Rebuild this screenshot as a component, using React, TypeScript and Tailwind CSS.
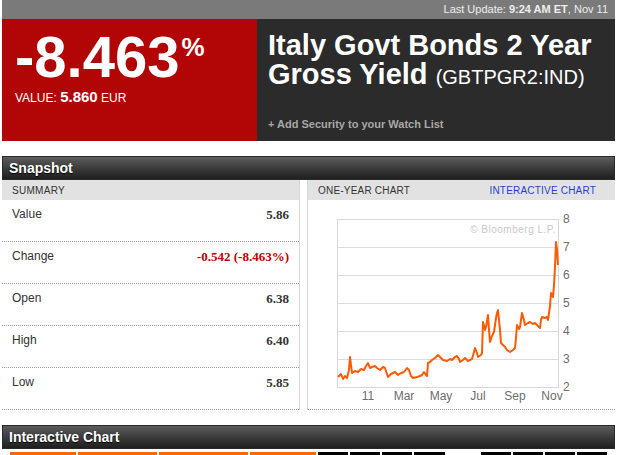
import React from "react";

type Row = { label: string; value: string; red?: boolean };

const rows: Row[] = [
  { label: "Value", value: "5.86" },
  { label: "Change", value: "-0.542 (-8.463%)", red: true },
  { label: "Open", value: "6.38" },
  { label: "High", value: "6.40" },
  { label: "Low", value: "5.85" },
];

// one-year yield series, in page pixel coordinates of the plot
const series: [number, number][] = [
  [338, 377], [341, 374], [343, 379], [345, 376], [347, 378], [349, 370], [350, 357], [351, 365],
  [352, 373], [355, 371], [358, 372], [361, 369], [364, 370], [366, 366], [368, 363], [370, 368],
  [372, 367], [375, 366], [377, 368], [380, 370], [383, 367], [385, 368], [387, 374], [388, 377],
  [391, 374], [395, 372], [398, 375], [401, 373], [404, 372], [407, 368], [409, 370], [411, 376],
  [413, 378], [417, 377], [420, 376], [422, 375], [424, 372], [426, 375], [427, 376], [428, 363],
  [430, 362], [432, 360], [435, 358], [438, 355], [440, 357], [443, 360], [447, 361], [450, 359],
  [452, 360], [455, 357], [457, 356], [459, 359], [460, 362], [463, 360], [465, 358], [468, 361],
  [472, 359], [474, 352], [475, 348], [477, 353], [478, 357], [481, 355], [482, 353], [483, 322],
  [485, 330], [486, 327], [488, 315], [489, 330], [490, 342], [492, 336], [494, 332], [496, 318],
  [497, 313], [498, 310], [500, 330], [501, 343], [503, 345], [505, 347], [507, 350], [510, 352],
  [513, 350], [515, 348], [516, 338], [517, 325], [519, 329], [520, 327], [522, 313], [524, 320],
  [525, 325], [528, 323], [530, 322], [533, 324], [535, 323], [538, 326], [540, 328], [541, 320],
  [542, 317], [545, 318], [547, 317], [548, 320], [550, 306], [551, 293], [553, 297], [554, 285],
  [555, 267], [556, 242], [557, 250], [558, 265],
];

const gridYs = [219, 247, 275, 303, 331, 359, 387];
const yLabels = ["8", "7", "6", "5", "4", "3", "2"];
const months: [string, number][] = [
  ["11", 368], ["Mar", 404], ["May", 441], ["Jul", 478], ["Sep", 515], ["Nov", 552],
];

function SectionBar({ title }: { title: string }) {
  return (
    <div className="h-[24px] flex items-center pl-[6px] bg-gradient-to-b from-[#5c5c5c] to-[#1f1f1f] border border-[#2a2a2a]">
      <span className="text-white text-[14px] font-bold font-['Liberation_Sans',sans-serif] [text-shadow:0_1px_1px_#000]">
        {title}
      </span>
    </div>
  );
}

function YieldChart() {
  const points = series.map(([x, y]) => `${x},${y}`).join(" ");
  return (
    <svg width="307" height="209" viewBox="308 200 307 209" className="block">
      <rect x="337.5" y="219.5" width="221" height="168" fill="#fff" stroke="#d8d8d8" />
      {gridYs.slice(1, -1).map((y) => (
        <line key={y} x1="338" x2="558" y1={y + 0.5} y2={y + 0.5} stroke="#dcdcdc" />
      ))}
      <text x="556" y="233" textAnchor="end" fontSize="10" fill="#c8c8c8" fontFamily="Liberation Sans, sans-serif" letterSpacing="0.5">
        © Bloomberg L.P.
      </text>
      {gridYs.map((y, i) => (
        <text key={y} x="563" y={y + 4} fontSize="12" fill="#6d6d6d" fontFamily="Liberation Sans, sans-serif">
          {yLabels[i]}
        </text>
      ))}
      {months.map(([m, x]) => (
        <text key={m} x={x} y="400" textAnchor="middle" fontSize="12" fill="#6d6d6d" fontFamily="Liberation Sans, sans-serif">
          {m}
        </text>
      ))}
      <polyline points={points} fill="none" stroke="#ff5a00" strokeWidth="2" strokeLinejoin="round" />
    </svg>
  );
}

export default function App() {
  return (
    <div className="w-[625px] h-[455px] overflow-hidden bg-white font-['Liberation_Sans',sans-serif]">
      <div className="ml-[2px] w-[613px]">
        {/* update strip */}
        <div className="h-[19px] bg-[#7a7a7a] flex items-center justify-end pr-[7px] text-[11px] text-[#eeeeee]">
          Last Update:&nbsp;<b>9:24 AM ET</b>, Nov 11
        </div>

        {/* quote header */}
        <div className="flex h-[122px]">
          <div className="w-[255px] bg-[#b20606] pl-[13px] pt-[9px] text-white">
            <div className="flex items-start leading-none">
              <span className="text-[58px] font-bold">-8.463</span>
              <span className="text-[26px] font-bold mt-[6px] ml-[2px]">%</span>
            </div>
            <div className="mt-[3px] flex items-baseline text-[12px] leading-none">
              <span>VALUE:&nbsp;</span>
              <span className="text-[15px] font-bold">5.860</span>
              <span>&nbsp;EUR</span>
            </div>
          </div>
          <div className="flex-1 bg-[#2b2b2b] pl-[11px] pt-[12px] flex flex-col">
            <div className="text-white text-[29px] font-bold leading-[29px]">
              Italy Govt Bonds 2 Year
              <br />
              Gross Yield{" "}
              <span className="text-[20px] font-normal">(GBTPGR2:IND)</span>
            </div>
            <div className="mt-auto mb-[9px] text-[11px] font-bold text-[#a8a8a8]">
              + Add Security to your Watch List
            </div>
          </div>
        </div>

        <div className="h-[15px]" />
        <SectionBar title="Snapshot" />

        <div className="flex">
          {/* summary table */}
          <div className="w-[299px] border-r border-[#d6d6d6]">
            <div className="h-[20px] bg-[#e2e2e2] flex items-center pl-[10px] text-[10px] tracking-[0.3px] text-[#333]">
              SUMMARY
            </div>
            {rows.map((r) => (
              <div
                key={r.label}
                className="h-[42px] border-b border-dotted border-[#9a9a9a] flex justify-between items-start pt-[5px] pl-[10px] pr-[10px]"
              >
                <span className="text-[12px] text-[#333]">{r.label}</span>
                <span
                  className={`text-[13px] font-bold font-['Liberation_Serif',serif] ${
                    r.red ? "text-[#c00000]" : "text-[#333]"
                  }`}
                >
                  {r.value}
                </span>
              </div>
            ))}
          </div>

          {/* one-year chart panel */}
          <div className="ml-[7px] flex-1 border-l border-[#d6d6d6]">
            <div className="h-[20px] bg-[#e2e2e2] flex items-center justify-between pl-[10px] pr-[19px] text-[10px] tracking-[0.2px]">
              <span className="text-[#333]">ONE-YEAR CHART</span>
              <span className="text-[#1f3fd0]">INTERACTIVE CHART</span>
            </div>
            <div className="border-b border-dotted border-[#9a9a9a]">
              <YieldChart />
            </div>
          </div>
        </div>

        <div className="h-[15px]" />
        <SectionBar title="Interactive Chart" />

        {/* chart range tabs */}
        <div className="mt-[3px] ml-[8px] flex gap-[2px] h-[10px]">
          <div className="w-[66px] bg-[#ff6600]" />
          <div className="w-[79px] bg-[#ff6600]" />
          <div className="w-[89px] bg-[#ff6600]" />
          <div className="w-[66px] bg-[#ff6600]" />
          <div className="w-[30px] bg-black" />
          <div className="w-[30px] bg-black" />
          <div className="w-[30px] bg-black" />
          <div className="w-[31px] bg-black" />
          <div className="w-[32px]" />
          <div className="w-[30px] bg-black" />
          <div className="w-[30px] bg-black" />
          <div className="w-[30px] bg-black" />
          <div className="w-[30px] bg-black" />
        </div>
      </div>
    </div>
  );
}
